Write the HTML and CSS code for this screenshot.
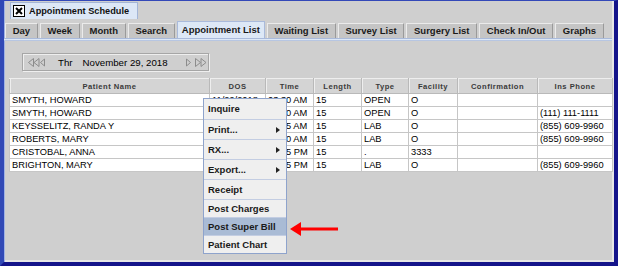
FILE: index.html
```html
<html lang="en">
<head>
    <meta name="viewport" content="width=device-width, initial-scale=1.0">
    <title>Appointment Schedule</title>
    <link rel="stylesheet" href="styles.css">
</head>
<body>
    <div class="window">
        <div class="frameTabs">
            <div class="frameTab">
                <span class="closeBox">
                    <svg width="10" height="10" viewBox="0 0 10 10"><path d="M2 2 L8 8 M8 2 L2 8" stroke="#000" stroke-width="2"/></svg>
                </span>
                Appointment Schedule
            </div>
        </div>
        <div class="tabs">
            <div class="tab">Day</div>
            <div class="tab">Week</div>
            <div class="tab">Month</div>
            <div class="tab">Search</div>
            <div class="tab selected">Appointment List</div>
            <div class="tab">Waiting List</div>
            <div class="tab">Survey List</div>
            <div class="tab">Surgery List</div>
            <div class="tab">Check In/Out</div>
            <div class="tab">Graphs</div>
        </div>
        <div class="tabLine"></div>
        <div class="content">
            <div class="dateBar">
                <svg class="navFirst" width="17" height="9" viewBox="0 0 17 9"><path d="M0.5 4.5 L5.5 0.5 L5.5 8.5 Z M6 4.5 L11 0.5 L11 8.5 Z M12.5 4.5 L16.5 1 L16.5 8 Z" fill="none" stroke="#8c8c8c"/></svg>
                <span class="day">Thr</span>
                <span class="date">November 29, 2018</span>
                <svg class="navLast" width="21" height="9" viewBox="0 0 21 9"><path d="M0.5 1 L4.5 4.5 L0.5 8 Z M9.5 0.5 L14.5 4.5 L9.5 8.5 Z M15 0.5 L20 4.5 L15 8.5 Z" fill="none" stroke="#8c8c8c"/></svg>
            </div>
            <table class="grid">
                <colgroup>
                    <col style="width:200px"><col style="width:56px"><col style="width:48px"><col style="width:48px">
                    <col style="width:47px"><col style="width:49px"><col style="width:80px"><col style="width:75px">
                </colgroup>
                <tr>
                    <th>Patient Name</th><th>DOS</th><th>Time</th><th>Length</th><th>Type</th><th>Facility</th><th>Confirmation</th><th>Ins Phone</th>
                </tr>
                <tr><td>SMYTH, HOWARD</td><td>11/29/2018</td><td>03:30 AM</td><td>15</td><td>OPEN</td><td>O</td><td></td><td></td></tr>
                <tr><td>SMYTH, HOWARD</td><td>11/29/2018</td><td>03:30 AM</td><td>15</td><td>OPEN</td><td>O</td><td></td><td>(111) 111-1111</td></tr>
                <tr><td>KEYSSELITZ, RANDA Y</td><td>11/29/2018</td><td>09:45 AM</td><td>15</td><td>LAB</td><td>O</td><td></td><td>(855) 609-9960</td></tr>
                <tr><td>ROBERTS, MARY</td><td>11/29/2018</td><td>10:00 AM</td><td>15</td><td>LAB</td><td>O</td><td></td><td>(855) 609-9960</td></tr>
                <tr><td>CRISTOBAL, ANNA</td><td>11/29/2018</td><td>01:15 PM</td><td>15</td><td>.</td><td>3333</td><td></td><td></td></tr>
                <tr><td>BRIGHTON, MARY</td><td>11/29/2018</td><td>01:45 PM</td><td>15</td><td>LAB</td><td>O</td><td></td><td>(855) 609-9960</td></tr>
            </table>
        </div>

        <!-- right-click menu over the grid -->
        <div class="popupMenu">
            <div class="menuItem">Inquire</div>
            <div class="menuItem sub">Print...</div>
            <div class="menuItem sub">RX...</div>
            <div class="menuItem sub">Export...</div>
            <div class="menuItem">Receipt</div>
            <div class="menuItem compact">Post Charges</div>
            <div class="menuItem compact active">Post Super Bill</div>
            <div class="menuItem compact">Patient Chart</div>
        </div>
        <svg class="callout" width="56" height="20" viewBox="0 0 56 20">
            <polygon points="4,10 15,3 15,17" fill="#f00"/>
            <rect x="14" y="8.5" width="38" height="3" fill="#f00"/>
        </svg>
    </div>
</body>
</html>
```

FILE: styles.css
```css
body {
    margin: 0;
    font-family: "Liberation Sans", Arial, sans-serif;
}
.window {
    position: relative;
    box-sizing: border-box;
    width: 618px;
    height: 266px;
    background-color: #cfcfcf;
    border-top: 1px solid #3348b8;
    border-right: 4px solid #14148a;
    border-bottom: 4px solid #14148a;
    border-left: 4px solid #3149b6;
    box-shadow: inset 1px 0 #9fb2e4, inset -2px 0 #e6e6e6, inset 0 -2px #e6e6e6;
}
.frameTabs {
    height: 19px;
    padding-top: 1px;
    box-sizing: border-box;
}
.frameTab {
    display: inline-flex;
    align-items: center;
    height: 17px;
    margin-left: 6px;
    padding: 0 8px 0 2px;
    box-sizing: border-box;
    background-color: #dce7f6;
    border: 1px solid #a3b5d6;
    border-bottom: none;
    font-size: 9.2px;
    font-weight: bold;
    color: #111;
    white-space: nowrap;
}
.closeBox {
    display: inline-flex;
    align-items: center;
    justify-content: center;
    width: 12px;
    height: 12px;
    box-sizing: border-box;
    margin-right: 4px;
    background-color: #fff;
    border: 1px solid #000;
}
.tabs {
    display: flex;
    align-items: flex-end;
    gap: 2px;
    height: 18px;
    padding-left: 1px;
}
.tab {
    flex-shrink: 0;
    height: 15px;
    line-height: 14px;
    padding: 0 6.7px;
    box-sizing: border-box;
    background-color: #c5c5c5;
    border: 1px solid #ebebeb;
    border-right-color: #9a9a9a;
    border-bottom: none;
    font-size: 9.5px;
    font-weight: bold;
    color: #1a1a1a;
    white-space: nowrap;
}
.tab.selected {
    height: 17px;
    line-height: 16px;
    padding: 0 4px;
    background-color: #dde8f6;
    border-color: #a9badb;
}
.tabLine {
    height: 3px;
    box-sizing: border-box;
    background-color: #dde8f6;
    border-top: 1px solid #a9badb;
    border-bottom: 1px solid #b7c6e2;
    margin-right: 2px;
}
.content {
    padding: 12px 0 0 5px;
}
.dateBar {
    display: flex;
    align-items: center;
    width: 187px;
    height: 18px;
    margin-left: 13px;
    box-sizing: border-box;
    border: 1px solid #a6a6a6;
    box-shadow: inset 1px 1px #eeeeee, 1px 1px #efefef;
    font-size: 9.7px;
    color: #000;
    white-space: nowrap;
}
.navFirst {
    flex-shrink: 0;
    margin-left: 5px;
}
.day {
    margin-left: 13px;
}
.date {
    margin-left: 10px;
}
.navLast {
    flex-shrink: 0;
    margin-left: 18px;
}
.grid {
    margin-top: 7px;
    border-collapse: collapse;
    table-layout: fixed;
    width: 603px;
    font-size: 9.3px;
}
.grid th {
    height: 15px;
    padding: 0;
    background-color: #d4d4d4;
    border: 1px solid #b9b9b9;
    border-top-color: #eeeeee;
    box-shadow: inset 1px 0 #eeeeee;
    font-size: 7.6px;
    font-weight: bold;
    letter-spacing: 0.5px;
    color: #3a3a3a;
    text-align: center;
    white-space: nowrap;
}
.grid td {
    height: 13px;
    padding: 0 0 0 2px;
    background-color: #fff;
    border: 1px solid #c6c6c6;
    white-space: nowrap;
    overflow: hidden;
    color: #000;
    line-height: 11px;
}
.popupMenu {
    position: absolute;
    left: 199px;
    top: 97px;
    width: 84px;
    box-sizing: border-box;
    background-color: #efefef;
    border: 1px solid #8ea3cc;
}
.menuItem {
    position: relative;
    height: 20px;
    line-height: 20px;
    padding-left: 4px;
    box-sizing: border-box;
    border-top: 1px solid #c3cde2;
    font-size: 9.5px;
    font-weight: bold;
    color: #1a1a1a;
    white-space: nowrap;
}
.menuItem:first-child {
    border-top: none;
}
.menuItem.compact {
    height: 18px;
    line-height: 17px;
}
.menuItem.sub::after {
    content: "";
    position: absolute;
    right: 6px;
    top: 7px;
    border-left: 4px solid #222;
    border-top: 3px solid transparent;
    border-bottom: 3px solid transparent;
}
.menuItem.active {
    background-color: #a9bbd5;
}
.callout {
    position: absolute;
    left: 282px;
    top: 218px;
}
```
